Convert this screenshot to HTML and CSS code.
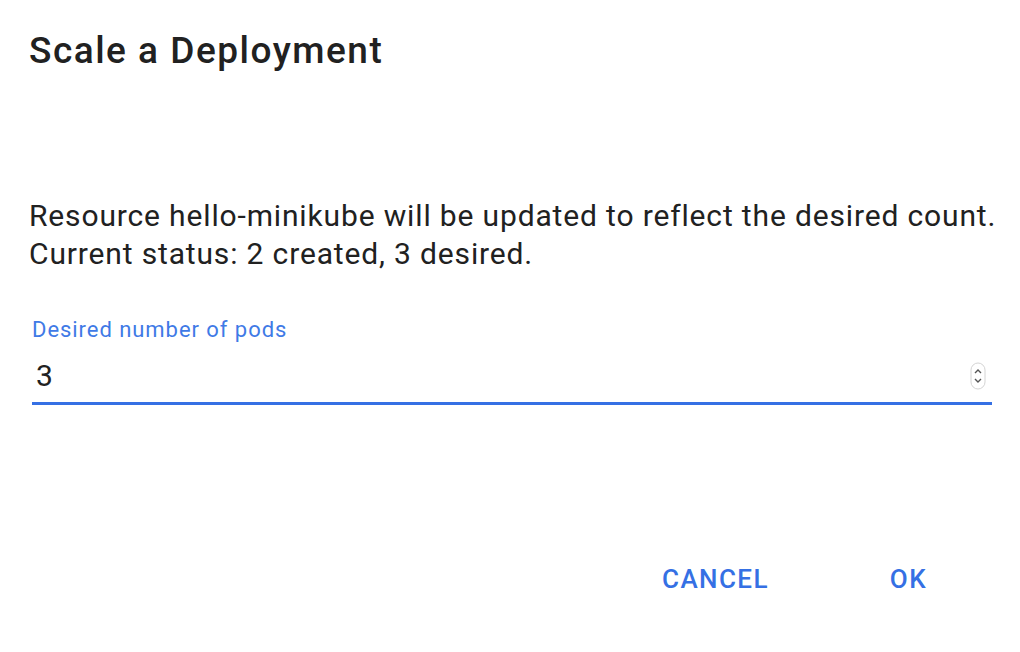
FILE: index.html
```html
<!DOCTYPE html>
<html>
<head>
<meta charset="utf-8">
<link rel="stylesheet" href="styles.css">
</head>
<body>
<div class="dialog">
  <h1 class="title">Scale a Deployment</h1>
  <div class="content">
    <p class="message">Resource hello-minikube will be updated to reflect the desired count.<br>Current status: 2 created, 3 desired.</p>
    <div class="field">
      <label class="label">Desired number of pods</label>
      <div class="input-row">
        <span class="value">3</span>
        <span class="spinner">
          <svg width="16" height="28" viewBox="0 0 16 28">
            <rect x="1" y="1" width="14" height="26" rx="7" fill="#fff" stroke="#d4d4d4" stroke-width="1"/>
            <path d="M5 11 L8 8 L11 11" fill="none" stroke="#555" stroke-width="1.4"/>
            <path d="M5 17 L8 20 L11 17" fill="none" stroke="#555" stroke-width="1.4"/>
          </svg>
        </span>
      </div>
    </div>
  </div>
  <div class="actions">
    <button class="btn">CANCEL</button>
    <button class="btn">OK</button>
  </div>
</div>
</body>
</html>
```
FILE: styles.css
```css
html, body {
  margin: 0;
  padding: 0;
  background: #fff;
}
body {
  font-family: Roboto, "Liberation Sans", sans-serif;
  color: #212121;
}
.dialog {
  width: 1020px;
  height: 652px;
  box-sizing: border-box;
  padding: 0 0 0 29px;
  display: flex;
  flex-direction: column;
}
.title {
  margin: 29px 0 0 0;
  font-size: 37px;
  font-weight: 500;
  line-height: 44px;
  letter-spacing: 1.5px;
  color: #212121;
}
.content {
  padding-top: 124px;
}
.message {
  margin: 0;
  font-size: 30px;
  line-height: 38px;
  letter-spacing: 0.85px;
  white-space: nowrap;
}
.field {
  margin-top: 43px;
  margin-left: 3px;
  width: 960px;
}
.label {
  display: block;
  font-size: 22px;
  line-height: 28px;
  letter-spacing: 0.95px;
  color: #3f7ae6;
}
.input-row {
  display: flex;
  align-items: center;
  justify-content: space-between;
  height: 61px;
  box-sizing: border-box;
  padding: 6px 6px 0 4px;
  border-bottom: 3px solid #3570e4;
}
.value {
  font-size: 30px;
  line-height: 36px;
  color: #212121;
}
.spinner {
  display: flex;
}
.actions {
  display: flex;
  justify-content: flex-end;
  gap: 89px;
  margin-top: 156px;
  padding-right: 77px;
}
.btn {
  font-family: Roboto, "Liberation Sans", sans-serif;
  font-size: 26px;
  font-weight: 500;
  color: #3570e4;
  background: none;
  border: none;
  padding: 0 16px;
  letter-spacing: 1.4px;
  line-height: 36px;
}
```
